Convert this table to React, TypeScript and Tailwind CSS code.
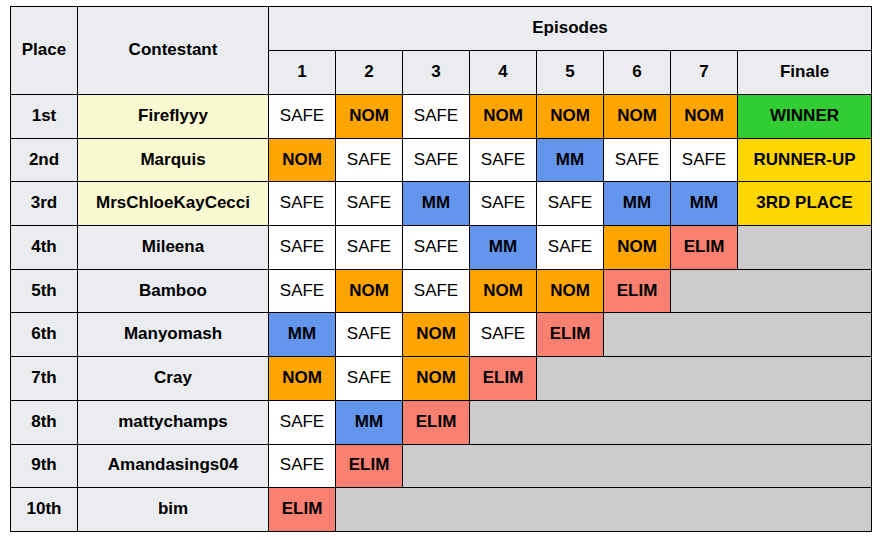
const rows: [string, string, string[], string?][] = [
  ["1st", "Fireflyyy", ["SAFE", "NOM", "SAFE", "NOM", "NOM", "NOM", "NOM"], "WINNER"],
  ["2nd", "Marquis", ["NOM", "SAFE", "SAFE", "SAFE", "MM", "SAFE", "SAFE"], "RUNNER-UP"],
  ["3rd", "MrsChloeKayCecci", ["SAFE", "SAFE", "MM", "SAFE", "SAFE", "MM", "MM"], "3RD PLACE"],
  ["4th", "Mileena", ["SAFE", "SAFE", "SAFE", "MM", "SAFE", "NOM", "ELIM"]],
  ["5th", "Bamboo", ["SAFE", "NOM", "SAFE", "NOM", "NOM", "ELIM"]],
  ["6th", "Manyomash", ["MM", "SAFE", "NOM", "SAFE", "ELIM"]],
  ["7th", "Cray", ["NOM", "SAFE", "NOM", "ELIM"]],
  ["8th", "mattychamps", ["SAFE", "MM", "ELIM"]],
  ["9th", "Amandasings04", ["SAFE", "ELIM"]],
  ["10th", "bim", ["ELIM"]],
];

const cellClass: Record<string, string> = {
  SAFE: "bg-white font-normal",
  NOM: "bg-[#ffa500] font-bold",
  MM: "bg-[#6495ed] font-bold",
  ELIM: "bg-[#fa8072] font-bold",
  WINNER: "bg-[#32cd32] font-bold",
  "RUNNER-UP": "bg-[#ffd700] font-bold",
  "3RD PLACE": "bg-[#ffd700] font-bold",
};

const td = "border border-black text-center px-0 pt-0 pb-[2px] leading-none";

export default function App() {
  return (
    <div className="w-[880px] h-[540px] bg-white pt-[6px] pl-[10px] font-['Liberation_Sans',Arial,sans-serif] text-[17px] text-black">
      <table className="table-fixed border-collapse w-[862px]">
        <colgroup>
          <col className="w-[67px]" />
          <col className="w-[191px]" />
          {[1, 2, 3, 4, 5, 6, 7].map((i) => (
            <col key={i} className="w-[67px]" />
          ))}
          <col className="w-[134px]" />
        </colgroup>
        <thead>
          <tr className="h-[44px]">
            <th rowSpan={2} className={`${td} bg-[#eaecf0] font-bold`}>Place</th>
            <th rowSpan={2} className={`${td} bg-[#eaecf0] font-bold`}>Contestant</th>
            <th colSpan={8} className={`${td} bg-[#eaecf0] font-bold`}>Episodes</th>
          </tr>
          <tr className="h-[44px]">
            {["1", "2", "3", "4", "5", "6", "7", "Finale"].map((h) => (
              <th key={h} className={`${td} bg-[#eaecf0] font-bold`}>{h}</th>
            ))}
          </tr>
        </thead>
        <tbody>
          {rows.map(([place, name, eps, fin], r) => {
            const filled = eps.length + (fin ? 1 : 0);
            return (
              <tr key={place} className="h-[43.7px]">
                <td className={`${td} bg-[#eaecf0] font-bold`}>{place}</td>
                <td className={`${td} font-bold ${r < 3 ? "bg-[#fafad2]" : "bg-[#eaecf0]"}`}>{name}</td>
                {eps.map((e, i) => (
                  <td key={i} className={`${td} ${cellClass[e]}`}>{e}</td>
                ))}
                {fin && <td className={`${td} ${cellClass[fin]}`}>{fin}</td>}
                {filled < 8 && <td colSpan={8 - filled} className={`${td} bg-[#cccccc]`} />}
              </tr>
            );
          })}
        </tbody>
      </table>
    </div>
  );
}
